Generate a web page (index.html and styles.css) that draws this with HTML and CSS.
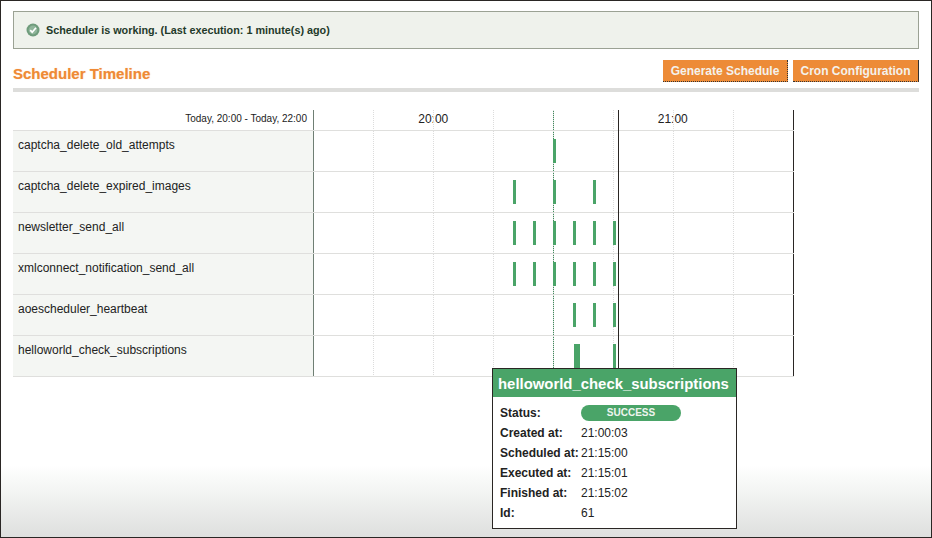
FILE: index.html
```html
<!DOCTYPE html>
<html lang="en">
<head>
<meta charset="utf-8">
<title>Scheduler Timeline</title>
<link rel="stylesheet" href="styles.css">
</head>
<body>
<div class="frame">
  <div class="notice">
    <svg class="notice-icon" width="14" height="14" viewBox="0 0 14 14"><circle cx="7" cy="7" r="6.5" fill="#6f9c7c"/><circle cx="7" cy="7" r="4.4" fill="#8fb59a"/><path d="M4.2 7.2 6.2 9.2 10 4.8" fill="none" stroke="#fff" stroke-width="1.7"/></svg>
    <span>Scheduler is working. (Last execution: 1 minute(s) ago)</span>
  </div>
  <div class="head">
    <h1 class="title">Scheduler Timeline</h1>
    <div class="actions">
      <button class="btn btn-gen">Generate Schedule</button>
      <button class="btn btn-cron">Cron Configuration</button>
    </div>
  </div>
  <div class="timeline">
    <div class="row row-head">
      <div class="label label-range">Today, 20:00 - Today, 22:00</div>
      <div class="track track-head">
        <span class="hour">20:00</span>
        <span class="hour">21:00</span>
      </div>
    </div>
    <div class="row">
      <div class="label">captcha_delete_old_attempts</div>
      <div class="track"><i class="bar" style="left:240px"></i></div>
    </div>
    <div class="row">
      <div class="label">captcha_delete_expired_images</div>
      <div class="track"><i class="bar" style="left:200px"></i><i class="bar" style="left:240px"></i><i class="bar" style="left:280px"></i></div>
    </div>
    <div class="row">
      <div class="label">newsletter_send_all</div>
      <div class="track"><i class="bar" style="left:200px"></i><i class="bar" style="left:220px"></i><i class="bar" style="left:240px"></i><i class="bar" style="left:260px"></i><i class="bar" style="left:280px"></i><i class="bar" style="left:300px"></i></div>
    </div>
    <div class="row">
      <div class="label">xmlconnect_notification_send_all</div>
      <div class="track"><i class="bar" style="left:200px"></i><i class="bar" style="left:220px"></i><i class="bar" style="left:240px"></i><i class="bar" style="left:260px"></i><i class="bar" style="left:280px"></i><i class="bar" style="left:300px"></i></div>
    </div>
    <div class="row">
      <div class="label">aoescheduler_heartbeat</div>
      <div class="track"><i class="bar" style="left:260px"></i><i class="bar" style="left:280px"></i><i class="bar" style="left:300px"></i></div>
    </div>
    <div class="row">
      <div class="label">helloworld_check_subscriptions</div>
      <div class="track"><i class="bar bar-wide" style="left:261px"></i><i class="bar" style="left:300px"></i></div>
    </div>
    <div class="now"></div>
    <div class="tooltip">
      <div class="tip-title">helloworld_check_subscriptions</div>
      <dl class="tip-body">
        <dt>Status:</dt><dd><span class="pill">SUCCESS</span></dd>
        <dt>Created at:</dt><dd>21:00:03</dd>
        <dt>Scheduled at:</dt><dd>21:15:00</dd>
        <dt>Executed at:</dt><dd>21:15:01</dd>
        <dt>Finished at:</dt><dd>21:15:02</dd>
        <dt>Id:</dt><dd>61</dd>
      </dl>
    </div>
  </div>
</div>
</body>
</html>
```
FILE: styles.css
```css
* { box-sizing: border-box; }
html, body { margin: 0; padding: 0; }
body {
  width: 932px;
  height: 538px;
  overflow: hidden;
  font-family: "Liberation Sans", Arial, sans-serif;
  color: #222;
}
.frame {
  width: 932px;
  height: 538px;
  padding: 10px 12px 0 12px;
  border: 1px solid #2a2624;
  background: linear-gradient(to bottom, #fff 0, #fff 464px, #f3f5f3 490px, #dedfde 536px);
}
.notice {
  width: 906px;
  height: 38px;
  display: flex;
  align-items: center;
  gap: 6px;
  padding-left: 12px;
  border: 1px solid #9ba294;
  background: #eff2ec;
  font-size: 10.8px;
  font-weight: bold;
  color: #1f3a2a;
}
.head {
  width: 906px;
  height: 32px;
  margin-top: 11px;
  display: flex;
  justify-content: space-between;
  align-items: flex-start;
  border-bottom: 4px solid #dddddb;
}
.title {
  margin: 5px 0 0;
  font-size: 15px;
  line-height: 18px;
  font-weight: bold;
  color: #ef8a35;
  text-shadow: 0 0 1px rgba(239, 138, 53, 0.5);
}
.actions { display: flex; gap: 5px; }
.btn {
  height: 22px;
  padding: 0;
  border: 0;
  border-bottom: 1px dotted #333;
  background: #ed8b37;
  color: #f4f2ec;
  font: bold 12px "Liberation Sans", Arial, sans-serif;
}
.btn-gen { width: 125px; border-right: 1px dotted #333; }
.btn-cron { width: 126px; border-right: 1px solid #333; }
.timeline {
  position: relative;
  width: 781px;
  margin-top: 18px;
}
.row {
  display: flex;
  height: 41px;
  border-bottom: 1px solid #dfdfdd;
}
.row-head { height: 21px; }
.label {
  width: 300px;
  padding: 7px 0 0 5px;
  background: #f4f6f3;
  font-size: 12px;
  line-height: 14px;
  color: #222;
}
.label-range {
  padding: 2px 6px 0 0;
  background: none;
  font-size: 10px;
  text-align: right;
}
.track {
  position: relative;
  width: 481px;
  border-left: 1px solid #6f7f74;
  border-right: 1px solid #2a2624;
}
.track::before {
  content: "";
  position: absolute;
  top: 0;
  bottom: 0;
  left: 239px;
  border-left: 1px dotted #3f8d5c;
}
.track::after {
  content: "";
  position: absolute;
  inset: 0;
  background: repeating-linear-gradient(to right, transparent 0 59px, #dcdcdc 59px 60px);
  -webkit-mask-image: repeating-linear-gradient(to bottom, #000 0 1px, transparent 1px 2px);
  mask-image: repeating-linear-gradient(to bottom, #000 0 1px, transparent 1px 2px);
}
.track-head { display: flex; }
.hour {
  width: 239px;
  padding: 2px 0 0 0;
  text-align: center;
  font-size: 12px;
  line-height: 14px;
  color: #222;
}
.hour + .hour { width: 241px; }
.bar {
  position: absolute;
  z-index: 1;
  top: 8px;
  width: 3px;
  height: 24px;
  margin-left: -1px;
  background: #4aa468;
}
.bar-wide { width: 6px; }
.now {
  position: absolute;
  z-index: 1;
  top: 0;
  bottom: 0;
  left: 605px;
  width: 1px;
  background: #2a2624;
}
.tooltip {
  position: absolute;
  z-index: 2;
  left: 479px;
  top: 258px;
  width: 245px;
  height: 161px;
  border: 1px solid #2a2624;
  background: #fff;
}
.tip-title {
  height: 28px;
  padding: 1px 0 0 5px;
  background: #4aa468;
  color: #fff;
  font-size: 14.9px;
  font-weight: bold;
  line-height: 28px;
  white-space: nowrap;
}
.tip-body {
  display: grid;
  grid-template-columns: 81px 1fr;
  grid-auto-rows: 20px;
  margin: 6px 0 0;
  padding-left: 7px;
  font-size: 12px;
  line-height: 20px;
}
.tip-body dt { font-weight: bold; white-space: nowrap; }
.tip-body dd { margin: 0; }
.pill {
  display: block;
  width: 100px;
  height: 16px;
  margin-top: 2px;
  border-radius: 8px;
  background: #4aa468;
  color: #eef4ee;
  font-size: 10px;
  font-weight: bold;
  line-height: 16px;
  text-align: center;
}
```
